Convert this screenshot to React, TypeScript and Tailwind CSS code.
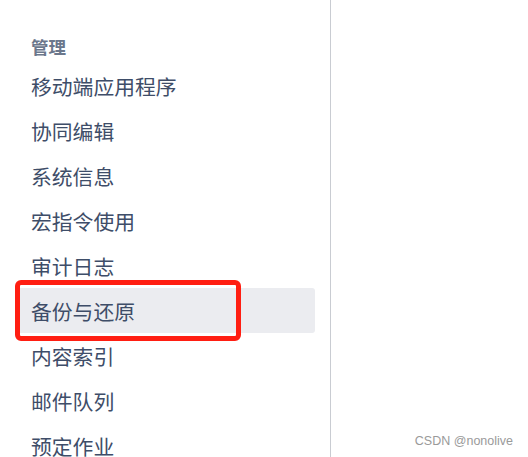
import React from "react";

const items = [
  "移动端应用程序",
  "协同编辑",
  "系统信息",
  "宏指令使用",
  "审计日志",
  "备份与还原",
  "内容索引",
  "邮件队列",
  "预定作业",
];

export default function App() {
  return (
    <div className="relative h-[457px] w-[528px] overflow-hidden bg-white font-['Noto_Sans_CJK_SC',sans-serif]">
      <div className="h-full w-[331px] border-r border-[#c9ccd2] pl-4 pr-[15px] pt-[35px]">
        <div className="pl-[15px] text-[17.5px] font-bold leading-[24px] text-[#6b778c]">
          管理
        </div>
        <ul className="mt-[4px] flex flex-col">
          {items.map((item) => (
            <li
              key={item}
              className={
                "flex h-[45px] items-center rounded-[3px] pl-[15px] pt-[2px] text-[20.8px] text-[#3e4d68] " +
                (item === "备份与还原" ? "bg-[#ebecf0]" : "")
              }
            >
              {item}
            </li>
          ))}
        </ul>
      </div>

      {/* annotation box */}
      <div className="absolute left-[15px] top-[280px] h-[61px] w-[226px] rounded-[6px] border-[length:5px] border-solid border-[#ff1e12]" />

      <div className="absolute bottom-[6px] right-[15px] font-['Liberation_Sans',sans-serif] text-[12.5px] text-[#9a9a9a]">
        CSDN @nonolive
      </div>
    </div>
  );
}
